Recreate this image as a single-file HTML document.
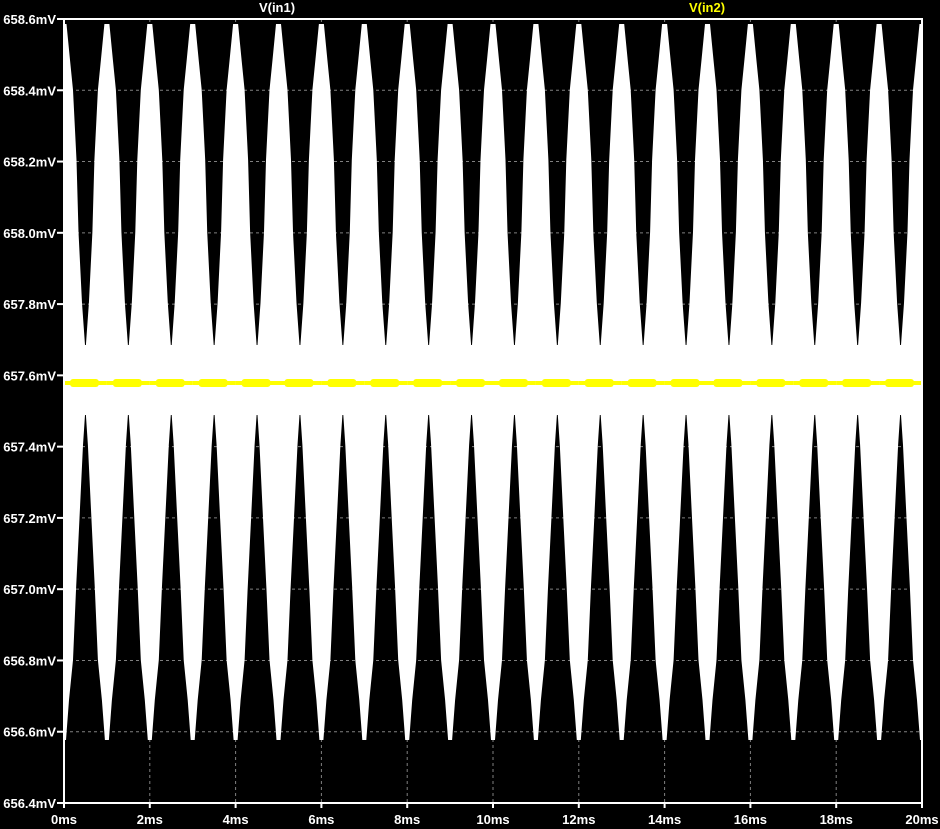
<!DOCTYPE html>
<html><head><meta charset="utf-8"><style>
html,body{margin:0;padding:0;background:#000;width:940px;height:829px;overflow:hidden}
svg{display:block}
text{font-family:"Liberation Sans",sans-serif;font-weight:bold;font-size:13px}
</style></head><body>
<svg id="s" width="940" height="829" xmlns="http://www.w3.org/2000/svg">
<rect width="940" height="829" fill="#000"/>
<g id="grid" stroke="#808080" stroke-width="1" stroke-dasharray="3,3"></g>
<g id="w" fill="#fff"></g>
<g id="y" fill="#ff0"></g>
<g id="ax"></g>
<text x="277" y="12" fill="#fff" text-anchor="middle">V(in1)</text>
<text x="707" y="12" fill="#ff0" text-anchor="middle">V(in2)</text>
</svg>
<script>
var NS="http://www.w3.org/2000/svg";
function el(p,t,a,txt){var e=document.createElementNS(NS,t);for(var k in a)e.setAttribute(k,a[k]);if(txt)e.textContent=txt;document.getElementById(p).appendChild(e);return e;}
var L=64,R=922,T=19,B=803;
var labels=["658.6mV","658.4mV","658.2mV","658.0mV","657.8mV","657.6mV","657.4mV","657.2mV","657.0mV","656.8mV","656.6mV","656.4mV"];
for(var i=0;i<12;i++){var y=T+(B-T)*i/11;
 if(i>0&&i<11)el("grid","line",{x1:L,y1:y,x2:R,y2:y});
 el("ax","line",{x1:57,y1:y,x2:L,y2:y,stroke:"#fff","stroke-width":2});
 el("ax","text",{x:56,y:y+5,fill:"#fff","text-anchor":"end"},labels[i]);}
for(var j=0;j<=10;j++){var x=L+(R-L)*j/10;
 if(j>0&&j<10)el("grid","line",{x1:x,y1:T,x2:x,y2:B});
 el("ax","line",{x1:x,y1:B,x2:x,y2:B+5,stroke:"#fff","stroke-width":2});
 el("ax","text",{x:x,y:824,fill:"#fff","text-anchor":"middle"},(2*j)+"ms");}
var P=(R-L)/20;
var prof=[[24,5],[60,12],[90,18],[160,25],[232,29],[303,36],[345,42],[415,42],[445,38],[518,31],[590,24],[660,18],[700,10],[740,4]];
var d="";
for(var k=0;k<=20;k++){var c=L+k*P;var pts=[];
 for(var q=0;q<prof.length;q++)pts.push((c+prof[q][1]/2)+","+prof[q][0]);
 for(var q=prof.length-1;q>=0;q--)pts.push((c-prof[q][1]/2)+","+prof[q][0]);
 d+="M"+pts.join(" L")+" Z ";}
var cp=el("s","clipPath",{id:"cp"});
var r=document.createElementNS(NS,"rect");r.setAttribute("x",L);r.setAttribute("y",T);r.setAttribute("width",R-L);r.setAttribute("height",B-T);cp.appendChild(r);
el("w","path",{d:d,"clip-path":"url(#cp)"});
el("w","rect",{x:L,y:345,width:R-L,height:70});
for(var k=0;k<20;k++){var c=L+k*P;
 el("y","rect",{x:c+6,y:379,width:P-14,height:8,rx:3});
 el("y","rect",{x:c,y:381,width:P,height:4});}
el("ax","path",{d:"M"+L+","+B+" L"+L+","+T+" L"+R+","+T+" L"+R+","+B+" Z",fill:"none",stroke:"#fff","stroke-width":2});
</script>
</body></html>
